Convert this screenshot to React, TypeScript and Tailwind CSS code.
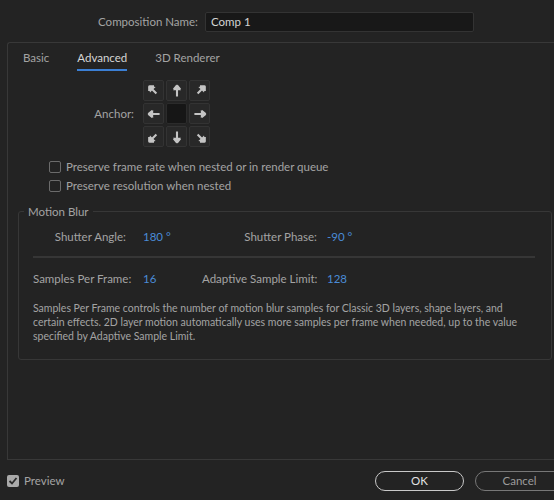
import { useState } from "react";

const ARROWS = [
  "M4 4 L13 13 M4 4 L4 10 M4 4 L10 4", // nw
  "M10 3 L10 17 M10 3 L6 8 M10 3 L14 8",
  "M16 4 L7 13 M16 4 L16 10 M16 4 L10 4", // ne
  "M3 10 L17 10 M3 10 L8 6 M3 10 L8 14",
  "",
  "M17 10 L3 10 M17 10 L12 6 M17 10 L12 14",
  "M4 16 L13 7 M4 16 L4 10 M4 16 L10 16",
  "M10 17 L10 3 M10 17 L6 12 M10 17 L14 12",
  "M16 16 L7 7 M16 16 L16 10 M16 16 L10 16",
];

// Flecha del anclaje (relleno en la punta, como en el original)
function Arrow({ idx }: { idx: number }) {
  const heads: Record<number, string> = {
    0: "M3 3 L12 5 L5 12 Z",
    1: "M10 2 L15 9 L5 9 Z",
    2: "M17 3 L15 12 L8 5 Z",
    3: "M2 10 L9 5 L9 15 Z",
    5: "M18 10 L11 5 L11 15 Z",
    6: "M3 17 L5 8 L12 15 Z",
    7: "M10 18 L5 11 L15 11 Z",
    8: "M17 17 L8 15 L15 8 Z",
  };
  if (idx === 4) return null;
  return (
    <svg width="16" height="16" viewBox="0 0 20 20">
      <path d={ARROWS[idx]} stroke="#c4c4c4" strokeWidth="2.6" fill="none" />
      <path d={heads[idx]} fill="#c4c4c4" />
    </svg>
  );
}

function Checkbox({ checked, label }: { checked: boolean; label: string }) {
  return (
    <label className="flex items-center gap-[5px] leading-[14px]">
      <span
        className={`w-[12px] h-[12px] rounded-[2px] flex items-center justify-center ${
          checked ? "bg-[#a9a9a9]" : "border border-[#6b6b6b]"
        }`}
      >
        {checked && (
          <svg width="10" height="10" viewBox="0 0 10 10">
            <path d="M1.5 5 L4 7.5 L8.5 2" stroke="#2a2a2a" strokeWidth="1.8" fill="none" />
          </svg>
        )}
      </span>
      <span>{label}</span>
    </label>
  );
}

export default function App() {
  const [tab, setTab] = useState("Advanced");
  const [anchor, setAnchor] = useState(4);

  return (
    <div
      className="w-[554px] h-[500px] bg-[#232323] text-[#a3a3a3] text-[11.5px] overflow-hidden flex flex-col whitespace-nowrap"
      style={{ fontFamily: "Lato, 'Open Sans', sans-serif" }}
    >
      <div className="flex items-center pt-[12px] h-[31px]">
        <span className="w-[198px] text-right">Composition Name:</span>
        <input
          defaultValue="Comp 1"
          className="ml-[7px] w-[269px] h-[20px] bg-[#181818] border border-[#333] rounded-[2px] px-[5px] text-[#d4d4d4] text-[11.5px] outline-none"
        />
      </div>

      <div className="mt-[11px] ml-[7px] h-[418px] border-t border-l border-b border-[#383838] rounded-tl-[3px] flex flex-col">
        <div className="flex gap-[28px] pl-[15px] pt-[7px]">
          {["Basic", "Advanced", "3D Renderer"].map((t) => (
            <button
              key={t}
              onClick={() => setTab(t)}
              className={`pb-[4px] border-b-2 leading-[15px] ${
                tab === t ? "text-[#d6d6d6] border-[#3b7fd4]" : "border-transparent"
              }`}
            >
              {t}
            </button>
          ))}
        </div>

        <div className="flex items-center mt-[9px]">
          <span className="w-[126px] text-right">Anchor:</span>
          <div className="ml-[9px] grid grid-cols-3 gap-[2px]">
            {ARROWS.map((_, i) => (
              <button
                key={i}
                onClick={() => setAnchor(i)}
                className={`w-[21px] h-[21px] rounded-[2px] border flex items-center justify-center ${
                  i === anchor ? "bg-[#161616] border-[#2b2b2b]" : "bg-[#282828] border-[#333]"
                }`}
              >
                {i !== anchor && <Arrow idx={i} />}
              </button>
            ))}
          </div>
        </div>

        <div className="flex flex-col gap-[5px] ml-[41px] mt-[13px]">
          <Checkbox checked={false} label="Preserve frame rate when nested or in render queue" />
          <Checkbox checked={false} label="Preserve resolution when nested" />
        </div>

        <fieldset className="mt-[10px] ml-[10px] w-[534px] border border-[#373737] rounded-[3px] px-[14px] pb-[16px]">
          <legend className="ml-[-9px] px-[4px]">Motion Blur</legend>
          <div className="flex items-center mt-[8px]">
            <span className="w-[93px] text-right">Shutter Angle:</span>
            <span className="ml-[17px] w-[59px] text-[#4a8bd6]">180 °</span>
            <span className="w-[115px] text-right">Shutter Phase:</span>
            <span className="ml-[10px] text-[#4a8bd6]">-90 °</span>
          </div>
          <div className="mt-[10px] mr-[2px] h-[2px] bg-[#363636]" />
          <div className="flex items-center mt-[12px]">
            <span className="w-[93px] text-right">Samples Per Frame:</span>
            <span className="ml-[17px] w-[59px] text-[#4a8bd6]">16</span>
            <span className="w-[115px] text-right">Adaptive Sample Limit:</span>
            <span className="ml-[10px] text-[#4a8bd6]">128</span>
          </div>
          <p className="mt-[14px] w-[490px] text-[10.5px] leading-[14px] whitespace-normal">
            Samples Per Frame controls the number of motion blur samples for Classic 3D layers, shape layers, and
            certain effects. 2D layer motion automatically uses more samples per frame when needed, up to the value
            specified by Adaptive Sample Limit.
          </p>
        </fieldset>
      </div>

      <div className="flex items-center mt-[11px] pl-[7px] w-[564px] shrink-0">
        <Checkbox checked={true} label="Preview" />
        <button className="ml-auto shrink-0 w-[89px] h-[20px] rounded-full border-[1.5px] border-[#c8c8c8] text-[#e2e2e2]">
          OK
        </button>
        <button className="ml-[11px] shrink-0 w-[89px] h-[20px] rounded-full border-[1.5px] border-[#777] text-[#9c9c9c]">
          Cancel
        </button>
      </div>
    </div>
  );
}
